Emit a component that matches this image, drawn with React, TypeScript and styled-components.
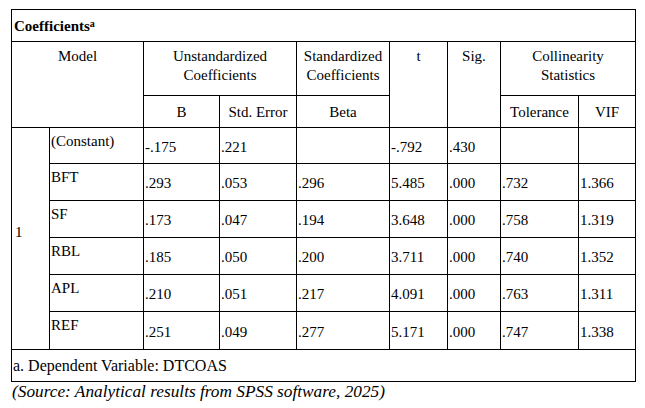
import React from "react";
import styled, { createGlobalStyle } from "styled-components";

const Global = createGlobalStyle`
  html, body { margin: 0; padding: 0; background: #fff; }
  body { font-family: "Liberation Serif", "Times New Roman", serif; color: #000; }
`;

const Page = styled.div`
  padding: 9px 0 0 11px;
  width: 645px;
  height: 408px;
  box-sizing: border-box;
  background: #fff;
`;

const Table = styled.table`
  border-collapse: collapse;
  table-layout: fixed;
  width: 624px;
  font-size: 15px;
  line-height: 20px;
  & td, & th {
    border: 1px solid #000;
    padding: 0;
    font-weight: normal;
    overflow: hidden;
    white-space: nowrap;
  }
`;

const TitleCell = styled.th`
  height: 31px;
  text-align: left;
  vertical-align: middle;
  padding: 0 0 0 2px !important;
  font-weight: bold !important;
  sup { font-size: 10px; line-height: 0; vertical-align: 4px; }
`;

const HeadTop = styled.th`
  height: 48px;
  text-align: center;
  vertical-align: top;
  padding-top: 5px !important;
  line-height: 19px;
`;

const HeadSub = styled.th`
  height: 31px;
  text-align: center;
  vertical-align: middle;
`;

const ModelNum = styled.td`
  vertical-align: middle;
  padding: 0 0 14px 3px !important;
`;

const VarCell = styled.td<{ $h: number }>`
  height: ${(p) => p.$h}px;
  vertical-align: top;
  padding: 3px 0 0 1px !important;
`;

const ValCell = styled.td`
  vertical-align: middle;
  padding: 2px 0 0 1px !important;
`;

const Footnote = styled.td`
  height: 31px;
  vertical-align: middle;
  padding-left: 1px !important;
  font-size: 16px;
`;

const Source = styled.div`
  font-style: italic;
  font-size: 17.3px;
  line-height: 20px;
  margin-top: 0px;
  padding-left: 1px;
`;

type Row = { name: string; vals: string[]; h: number };

const rows: Row[] = [
  { name: "(Constant)", vals: ["-.175", ".221", "", "-.792", ".430", "", ""], h: 32 },
  { name: "BFT", vals: [".293", ".053", ".296", "5.485", ".000", ".732", "1.366"], h: 33 },
  { name: "SF", vals: [".173", ".047", ".194", "3.648", ".000", ".758", "1.319"], h: 33 },
  { name: "RBL", vals: [".185", ".050", ".200", "3.711", ".000", ".740", "1.352"], h: 33 },
  { name: "APL", vals: [".210", ".051", ".217", "4.091", ".000", ".763", "1.311"], h: 33 },
  { name: "REF", vals: [".251", ".049", ".277", "5.171", ".000", ".747", "1.338"], h: 34 },
];

const widths = [38, 94, 76, 77, 93, 58, 53, 78, 57];

export default function App() {
  return (
    <Page>
      <Global />
      <Table>
        <colgroup>
          {widths.map((w, i) => (
            <col key={i} style={{ width: w }} />
          ))}
        </colgroup>
        <thead>
          <tr>
            <TitleCell colSpan={9}>
              Coefficients<sup>a</sup>
            </TitleCell>
          </tr>
          <tr>
            <HeadTop colSpan={2} rowSpan={2}>Model</HeadTop>
            <HeadTop colSpan={2}>
              Unstandardized
              <br />
              Coefficients
            </HeadTop>
            <HeadTop>
              Standardized
              <br />
              Coefficients
            </HeadTop>
            <HeadTop rowSpan={2}>t</HeadTop>
            <HeadTop rowSpan={2}>Sig.</HeadTop>
            <HeadTop colSpan={2}>
              Collinearity
              <br />
              Statistics
            </HeadTop>
          </tr>
          <tr>
            <HeadSub>B</HeadSub>
            <HeadSub>Std. Error</HeadSub>
            <HeadSub>Beta</HeadSub>
            <HeadSub>Tolerance</HeadSub>
            <HeadSub>VIF</HeadSub>
          </tr>
        </thead>
        <tbody>
          {rows.map((r, i) => (
            <tr key={r.name}>
              {i === 0 && <ModelNum rowSpan={rows.length}>1</ModelNum>}
              <VarCell $h={r.h}>{r.name}</VarCell>
              {r.vals.map((v, j) => (
                <ValCell key={j}>{v}</ValCell>
              ))}
            </tr>
          ))}
          <tr>
            <Footnote colSpan={9}>a. Dependent Variable: DTCOAS</Footnote>
          </tr>
        </tbody>
      </Table>
      <Source>(Source: Analytical results from SPSS software, 2025)</Source>
    </Page>
  );
}
